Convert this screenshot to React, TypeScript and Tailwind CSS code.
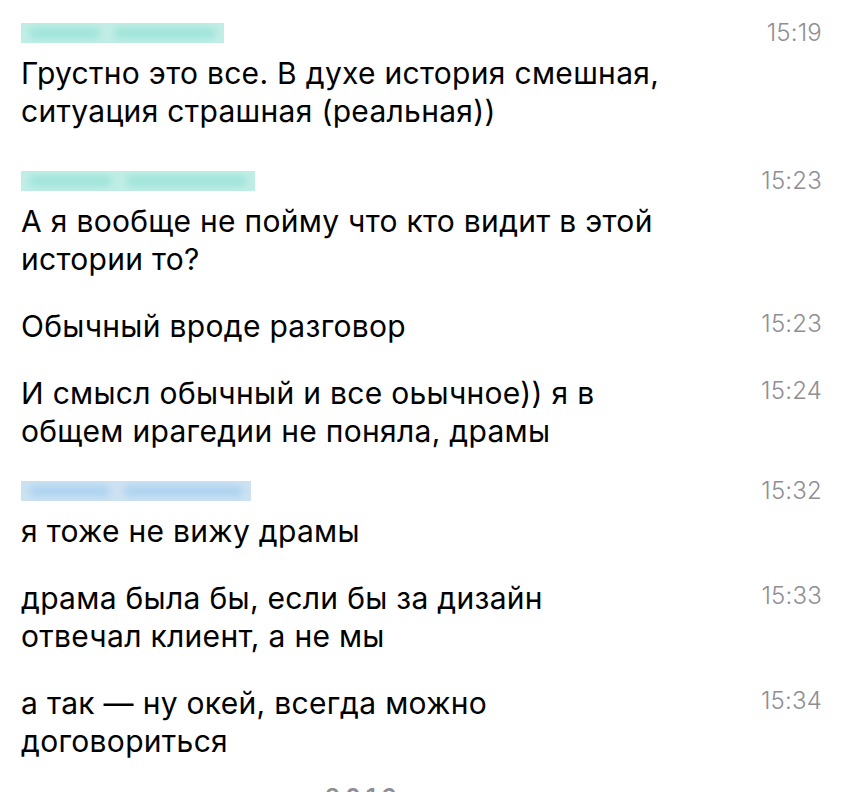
const FONT = "font-['Inter','Noto_Sans',sans-serif]";

type Msg = {
  name?: { w: number; tone: "teal" | "blue" };
  time: string;
  lines: string[];
  extraTop?: boolean;
};

const MESSAGES: Msg[] = [
  {
    name: { w: 203, tone: "teal" },
    time: "15:19",
    lines: ["Грустно это все. В духе история смешная,", "ситуация страшная (реальная))"],
  },
  {
    name: { w: 234, tone: "teal" },
    time: "15:23",
    lines: ["А я вообще не пойму что кто видит в этой", "истории то?"],
    extraTop: true,
  },
  { time: "15:23", lines: ["Обычный вроде разговор"] },
  {
    time: "15:24",
    lines: ["И смысл обычный и все оьычное)) я в", "общем ирагедии не поняла, драмы"],
  },
  {
    name: { w: 230, tone: "blue" },
    time: "15:32",
    lines: ["я тоже не вижу драмы"],
  },
  {
    time: "15:33",
    lines: ["драма была бы, если бы за дизайн", "отвечал клиент, а не мы"],
  },
  {
    time: "15:34",
    lines: ["а так — ну окей, всегда можно", "договориться"],
  },
];

function BlurredName({ w, tone }: { w: number; tone: "teal" | "blue" }) {
  const base = tone === "teal" ? "bg-[#c0eee6]" : "bg-[#cce2f3]";
  const spot = tone === "teal" ? "bg-[#a2e5da]" : "bg-[#b0d4ef]";
  return (
    <div className="h-[24px] flex items-center">
      <div className={`relative h-[20px] overflow-hidden ${base}`} style={{ width: w }}>
        <div className="absolute inset-0 flex items-center gap-[14px] px-[8px] blur-[3px]">
          <div className={`h-[12px] w-[38%] rounded-full ${spot}`} />
          <div className={`h-[12px] flex-1 rounded-full ${spot}`} />
        </div>
      </div>
    </div>
  );
}

function Message({ m }: { m: Msg }) {
  return (
    <div className={`flex items-start justify-between ${m.extraTop ? "mt-[10px]" : ""}`}>
      <div>
        {m.name && (
          <div className="mb-[9px]">
            <BlurredName w={m.name.w} tone={m.name.tone} />
          </div>
        )}
        <div className="text-[30px] leading-[38px] text-black tracking-[0.3px]">
          {m.lines.map((l, i) => (
            <div key={i}>{l}</div>
          ))}
        </div>
      </div>
      <div
        className={`text-[24px] leading-[24px] font-light text-[#8e8e93] tracking-[0.2px] ${
          m.name ? "mt-0" : "mt-[5px]"
        }`}
      >
        {m.time}
      </div>
    </div>
  );
}

export default function App() {
  return (
    <div className={`h-[792px] w-[860px] overflow-hidden bg-white ${FONT}`}>
      <div className="flex flex-col gap-[29px] pl-[21px] pr-[38px] pt-[21px]">
        {MESSAGES.map((m, i) => (
          <Message key={i} m={m} />
        ))}
      </div>
      <div className="mt-[20px] pl-[325px] text-[24px] font-semibold tracking-[5px] text-[#8e8e93]">
        2016
      </div>
    </div>
  );
}
